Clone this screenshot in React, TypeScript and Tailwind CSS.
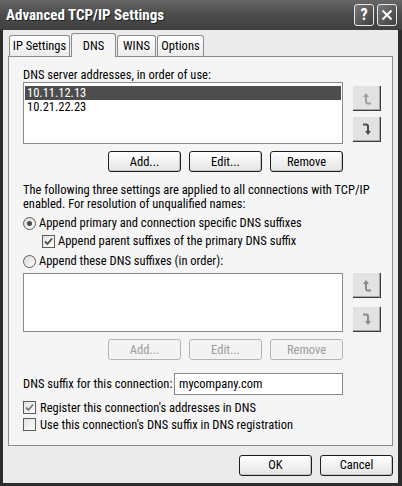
import React from "react";

const font = "font-['Roboto_Condensed','Liberation_Sans',sans-serif]";

const Button = ({ label, disabled = false }: { label: string; disabled?: boolean }) => (
  <div
    className={
      "h-[21px] w-[73px] rounded-[3px] border flex items-center justify-center text-[12.5px] " +
      (disabled
        ? "border-[#b4b4b4] bg-[#f3f3f3] text-[#9c9c9c]"
        : "border-[#1e1e1e] bg-linear-to-b from-white to-[#e4e4e4] text-black shadow-[inset_-1px_-1px_0_#c4c4c4]")
    }
  >
    {label}
  </div>
);

const Radio = ({ checked }: { checked: boolean }) => (
  <span className="w-[13px] h-[13px] rounded-full border border-[#5c5c5c] bg-linear-to-br from-[#d9d9d9] to-white flex items-center justify-center shrink-0">
    {checked && <span className="w-[5px] h-[5px] rounded-full bg-[#4a4a4a]" />}
  </span>
);

const Check = ({ checked, tone = "#444" }: { checked: boolean; tone?: string }) => (
  <span className="w-[13px] h-[13px] border border-[#5c5c5c] bg-linear-to-br from-[#e2e2e2] to-white flex items-center justify-center shrink-0">
    {checked && (
      <svg width="9" height="9" viewBox="0 0 9 9">
        <polyline points="1,4.5 3.5,7 8,1.5" fill="none" stroke={tone} strokeWidth="1.8" />
      </svg>
    )}
  </span>
);

const ArrowBtn = ({ dir, tone }: { dir: "up" | "down"; tone: string }) => (
  <div className="w-[28px] h-[25px] bg-[#e2e2e2] border-r border-b border-[#3c3c3c] shadow-[inset_-1px_-1px_0_#a8a8a8] flex items-center justify-center">
    {dir === "up" ? (
      <svg width="10" height="13" viewBox="0 0 10 13">
        <polygon points="1,5 4,1 7,5" fill={tone} />
        <path d="M4 4 V9.5 Q4 11.5 6 11.5 H9" fill="none" stroke={tone} strokeWidth="2" />
      </svg>
    ) : (
      <svg width="10" height="13" viewBox="0 0 10 13">
        <path d="M1 1.5 H4 Q6 1.5 6 3.5 V9" fill="none" stroke={tone} strokeWidth="2" />
        <polygon points="3,8 6,12 9,8" fill={tone} />
      </svg>
    )}
  </div>
);

export default function App() {
  return (
    <div className={`w-[402px] h-[486px] bg-[#2c2c2c] flex flex-col text-black ${font}`}>
      {/* Title bar */}
      <div className="h-[30px] shrink-0 bg-linear-to-b from-[#666] via-[#4b4b4b] to-[#3f3f3f] flex items-center justify-between pl-[6px] pr-[5px]">
        <span className="text-white text-[15px] font-bold [text-shadow:1px_1px_0_#222]">
          Advanced TCP/IP Settings
        </span>
        <div className="flex gap-[3px]">
          <div className="w-[20px] h-[22px] rounded-[3px] border border-[#e8e8e8] bg-linear-to-br from-[#7a7a7a] to-[#3e3e3e] flex items-center justify-center text-white text-[16px] font-bold leading-none">
            ?
          </div>
          <div className="w-[20px] h-[22px] rounded-[3px] border border-[#e8e8e8] bg-linear-to-br from-[#7a7a7a] to-[#3e3e3e] flex items-center justify-center">
            <svg width="12" height="12" viewBox="0 0 12 12">
              <path d="M1.5 1.5 L10.5 10.5 M10.5 1.5 L1.5 10.5" stroke="white" strokeWidth="2" />
            </svg>
          </div>
        </div>
      </div>

      {/* Body */}
      <div className="flex-1 ml-[3px] mr-[4px] mb-[3px] bg-[#ebebeb] pt-[3px] px-[5px] flex flex-col">
        {/* Tabs */}
        <div className="flex items-end h-[23px] pl-[1px] text-[12.5px]">
          <div className="h-[21px] w-[61px] border border-b-0 border-[#8c8c8c] rounded-t-[3px] bg-linear-to-b from-white to-[#ececec] flex items-center justify-center">
            IP Settings
          </div>
          <div className="relative z-10 h-[24px] -mb-[1px] w-[45px] ml-[1px] border border-b-0 border-[#8c8c8c] rounded-t-[3px] bg-[#f5f5f5] flex items-start justify-center pt-[3px]">
            DNS
          </div>
          <div className="h-[21px] w-[39px] ml-[1px] border border-b-0 border-[#8c8c8c] rounded-t-[3px] bg-linear-to-b from-white to-[#ececec] flex items-center justify-center">
            WINS
          </div>
          <div className="h-[21px] w-[47px] ml-[1px] border border-b-0 border-[#8c8c8c] rounded-t-[3px] bg-linear-to-b from-white to-[#ececec] flex items-center justify-center">
            Options
          </div>
        </div>

        {/* Panel */}
        <div className="h-[390px] border border-[#8c8c8c] bg-[#f5f5f5] pl-[14px] flex flex-col text-[12.5px] leading-[14px]">
          <div className="mt-[11px] h-[14px]">DNS server addresses, in order of use:</div>
          <div className="flex gap-[10px]">
            <div className="w-[320px] h-[62px] border border-[#8a8a8a] bg-white p-[1px] pt-[3px]">
              <div className="h-[14px] bg-[#4d4d4d] text-white pl-[2px]">10.11.12.13</div>
              <div className="h-[14px] pl-[2px]">10.21.22.23</div>
            </div>
            <div className="flex flex-col gap-[6px] pt-[4px]">
              <ArrowBtn dir="up" tone="#a0a0a0" />
              <ArrowBtn dir="down" tone="#4a4a4a" />
            </div>
          </div>
          <div className="mt-[7px] w-[320px] flex justify-end gap-[8px]">
            <Button label="Add..." />
            <Button label="Edit..." />
            <Button label="Remove" />
          </div>
          <div className="mt-[11px]">
            The following three settings are applied to all connections with TCP/IP
            <br />
            enabled. For resolution of unqualified names:
          </div>
          <div className="mt-[4px] h-[16px] flex items-center gap-[3px]">
            <Radio checked />
            <span>Append primary and connection specific DNS suffixes</span>
          </div>
          <div className="mt-[2px] h-[16px] flex items-center gap-[3px] pl-[19px]">
            <Check checked tone="#4a4a4a" />
            <span>Append parent suffixes of the primary DNS suffix</span>
          </div>
          <div className="mt-[4px] h-[16px] flex items-center gap-[3px]">
            <Radio checked={false} />
            <span>Append these DNS suffixes (in order):</span>
          </div>
          <div className="mt-[4px] flex gap-[10px]">
            <div className="w-[320px] h-[59px] border border-[#8a8a8a] bg-white" />
            <div className="flex flex-col gap-[9px]">
              <ArrowBtn dir="up" tone="#8a8a8a" />
              <ArrowBtn dir="down" tone="#8a8a8a" />
            </div>
          </div>
          <div className="mt-[7px] w-[320px] flex justify-end gap-[8px]">
            <Button label="Add..." disabled />
            <Button label="Edit..." disabled />
            <Button label="Remove" disabled />
          </div>
          <div className="mt-[13px] flex items-center">
            <span className="w-[151px]">DNS suffix for this connection:</span>
            <div className="w-[169px] h-[22px] border border-[#8a8a8a] bg-white flex items-center pl-[4px]">
              mycompany.com
            </div>
          </div>
          <div className="mt-[4px] h-[17px] flex items-center gap-[4px]">
            <Check checked tone="#7a7a7a" />
            <span>Register this connection's addresses in DNS</span>
          </div>
          <div className="h-[17px] flex items-center gap-[4px]">
            <Check checked={false} />
            <span>Use this connection's DNS suffix in DNS registration</span>
          </div>
        </div>

        {/* Footer */}
        <div className="mt-[9px] flex justify-end gap-[8px]">
          <Button label="OK" />
          <Button label="Cancel" />
        </div>
      </div>
    </div>
  );
}
